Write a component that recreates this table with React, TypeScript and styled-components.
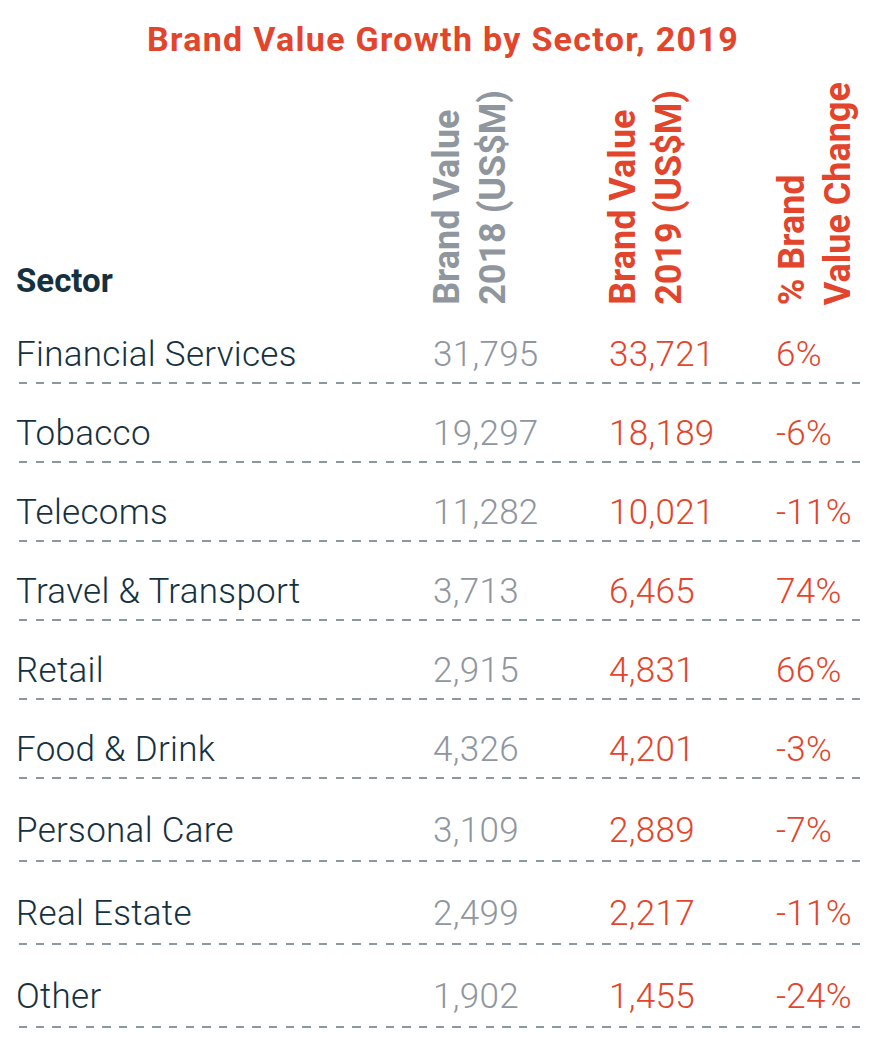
import React, { FC } from 'react';
import styled, { createGlobalStyle } from 'styled-components';

const colors = {
    RED: '#e2452b',
    NAVY: '#15313f',
    GRAY: '#8f969e',
    DASH: '#8d989e',
    WHITE: '#ffffff',
};

interface ISectorRow {
    sector: string,
    value2018: string,
    value2019: string,
    change: string,
    tall?: boolean,
}

const rows: ISectorRow[] = [
    { sector: 'Financial Services', value2018: '31,795', value2019: '33,721', change: '6%' },
    { sector: 'Tobacco', value2018: '19,297', value2019: '18,189', change: '-6%' },
    { sector: 'Telecoms', value2018: '11,282', value2019: '10,021', change: '-11%' },
    { sector: 'Travel & Transport', value2018: '3,713', value2019: '6,465', change: '74%' },
    { sector: 'Retail', value2018: '2,915', value2019: '4,831', change: '66%' },
    { sector: 'Food & Drink', value2018: '4,326', value2019: '4,201', change: '-3%' },
    { sector: 'Personal Care', value2018: '3,109', value2019: '2,889', change: '-7%', tall: true },
    { sector: 'Real Estate', value2018: '2,499', value2019: '2,217', change: '-11%', tall: true },
    { sector: 'Other', value2018: '1,902', value2019: '1,455', change: '-24%', tall: true },
];

const App: FC = () => {
    return (
        <Page>
            <GlobalStyle />
            <Title>Brand Value Growth by Sector, 2019</Title>
            <HeaderRow>
                <SectorHead>Sector</SectorHead>
                <RotatedHead color={colors.GRAY}>Brand Value<br />2018 (US$M)</RotatedHead>
                <RotatedHead color={colors.RED}>Brand Value<br />2019 (US$M)</RotatedHead>
                <RotatedHead color={colors.RED} shift={2}>% Brand<br />Value Change</RotatedHead>
            </HeaderRow>
            {rows.map((row) => (
                <Row key={row.sector} tall={row.tall}>
                    <Cells>
                        <Cell color={colors.NAVY}>{row.sector}</Cell>
                        <Cell color={colors.GRAY}>{row.value2018}</Cell>
                        <Cell color={colors.RED}>{row.value2019}</Cell>
                        <Cell color={colors.RED}>{row.change}</Cell>
                    </Cells>
                    <Divider />
                </Row>
            ))}
        </Page>
    )
}

const GlobalStyle = createGlobalStyle`
    body {
        margin: 0;
        background: ${colors.WHITE};
        font-family: Roboto, "Liberation Sans", sans-serif;
    }
`;

const Page = styled.div`
    width: 886px;
    display: flex;
    flex-direction: column;
`;

const Title = styled.h1`
    margin: 19px 0 0;
    text-align: center;
    font-size: 34px;
    line-height: 40px;
    font-weight: 700;
    letter-spacing: 1.3px;
    color: ${colors.RED};
`;

const grid = `
    display: grid;
    grid-template-columns: 417px 176px 167px 1fr;
    padding: 0 24px 0 16px;
`;

const HeaderRow = styled.div`
    ${grid}
    height: 246px;
    align-items: end;
`;

const SectorHead = styled.div`
    font-size: 33px;
    line-height: 40px;
    font-weight: 700;
    color: ${colors.NAVY};
    padding-bottom: 4px;
`;

const RotatedHead = styled.div<{ color: string, shift?: number }>`
    writing-mode: vertical-rl;
    transform: rotate(180deg);
    margin-left: ${props => (props.shift || 0) - 9}px;
    font-size: 36px;
    line-height: 46px;
    font-weight: 700;
    white-space: nowrap;
    color: ${props => props.color};
`;

const Row = styled.div<{ tall?: boolean }>`
    display: flex;
    flex-direction: column;
    padding-top: ${props => props.tall ? 32 : 30}px;
    gap: ${props => props.tall ? 9 : 7}px;
`;

const Cells = styled.div`
    ${grid}
    font-size: 35px;
    line-height: 40px;
    font-weight: 300;
    letter-spacing: 0.3px;
`;

const Cell = styled.div<{ color: string }>`
    color: ${props => props.color};
    white-space: nowrap;
`;

const Divider = styled.div`
    height: 2px;
    margin: 0 26px 0 19px;
    background: repeating-linear-gradient(
        to right,
        ${colors.DASH} 0,
        ${colors.DASH} 8.3px,
        transparent 8.3px,
        transparent 16.67px
    );
`;

export default App;
